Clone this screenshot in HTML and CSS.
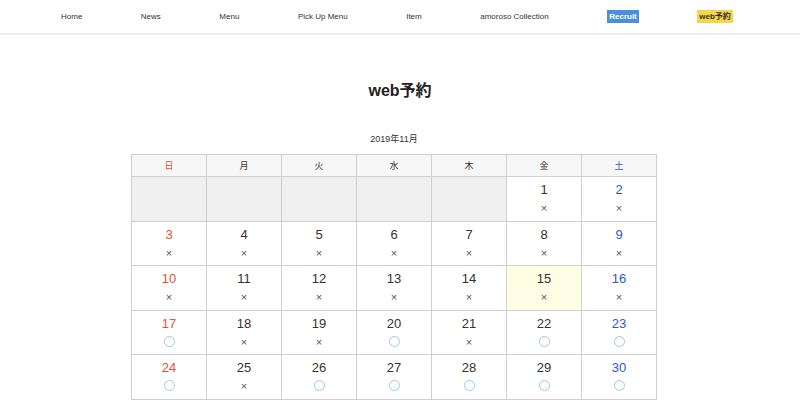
FILE: index.html
```html
<!DOCTYPE html>
<html lang="ja">
<head>
<meta charset="utf-8">
<link rel="stylesheet" href="styles.css">
</head>
<body>
<header class="nav">
  <a class="nav-item">Home</a>
  <a class="nav-item">News</a>
  <a class="nav-item">Menu</a>
  <a class="nav-item">Pick Up Menu</a>
  <a class="nav-item">Item</a>
  <a class="nav-item">amoroso Collection</a>
  <a class="nav-item badge badge-blue">Recruit</a>
  <a class="nav-item badge badge-yellow">web予約</a>
</header>
<main class="main">
  <h1 class="title">web予約</h1>
  <p class="month">2019年11月</p>
  <table class="cal">
    <thead>
      <tr><th class="sun">日</th><th>月</th><th>火</th><th>水</th><th>木</th><th>金</th><th class="sat">土</th></tr>
    </thead>
    <tbody>
      <tr>
        <td class="empty"></td><td class="empty"></td><td class="empty"></td><td class="empty"></td><td class="empty"></td>
        <td><span class="num">1</span><span class="x">×</span></td>
        <td><span class="num sat">2</span><span class="x">×</span></td>
      </tr>
      <tr>
        <td><span class="num sun">3</span><span class="x">×</span></td>
        <td><span class="num">4</span><span class="x">×</span></td>
        <td><span class="num">5</span><span class="x">×</span></td>
        <td><span class="num">6</span><span class="x">×</span></td>
        <td><span class="num">7</span><span class="x">×</span></td>
        <td><span class="num">8</span><span class="x">×</span></td>
        <td><span class="num sat">9</span><span class="x">×</span></td>
      </tr>
      <tr>
        <td><span class="num sun">10</span><span class="x">×</span></td>
        <td><span class="num">11</span><span class="x">×</span></td>
        <td><span class="num">12</span><span class="x">×</span></td>
        <td><span class="num">13</span><span class="x">×</span></td>
        <td><span class="num">14</span><span class="x">×</span></td>
        <td class="today"><span class="num">15</span><span class="x">×</span></td>
        <td><span class="num sat">16</span><span class="x">×</span></td>
      </tr>
      <tr>
        <td><span class="num sun">17</span><span class="o"></span></td>
        <td><span class="num">18</span><span class="x">×</span></td>
        <td><span class="num">19</span><span class="x">×</span></td>
        <td><span class="num">20</span><span class="o"></span></td>
        <td><span class="num">21</span><span class="x">×</span></td>
        <td><span class="num">22</span><span class="o"></span></td>
        <td><span class="num sat">23</span><span class="o"></span></td>
      </tr>
      <tr>
        <td><span class="num sun">24</span><span class="o"></span></td>
        <td><span class="num">25</span><span class="x">×</span></td>
        <td><span class="num">26</span><span class="o"></span></td>
        <td><span class="num">27</span><span class="o"></span></td>
        <td><span class="num">28</span><span class="o"></span></td>
        <td><span class="num">29</span><span class="o"></span></td>
        <td><span class="num sat">30</span><span class="o"></span></td>
      </tr>
    </tbody>
  </table>
</main>
</body>
</html>
```
FILE: styles.css
```css
html, body {
  margin: 0;
  padding: 0;
  background: #fff;
  font-family: "Liberation Sans", "Noto Sans CJK JP", sans-serif;
  color: #333;
}
.nav {
  display: flex;
  align-items: center;
  gap: 58.5px;
  height: 33px;
  padding-left: 61px;
  border-bottom: 2px solid #ececec;
  box-sizing: content-box;
}
.nav-item {
  font-size: 8px;
  color: #333;
  text-decoration: none;
  line-height: 13px;
}
.badge {
  font-weight: bold;
  padding: 0 2px;
  height: 13px;
}
.badge-blue {
  background: #4a8fdb;
  color: #fff;
}
.badge-yellow {
  background: #f5d54a;
  color: #333;
}
.main {
  padding-left: 131px;
  width: 526px;
}
.title {
  margin: 46px 0 0;
  font-size: 16px;
  line-height: 20px;
  font-weight: bold;
  text-align: center;
  color: #222;
  padding-left: 12px;
}
.month {
  margin: 32px 0 0;
  font-size: 9px;
  line-height: 12px;
  text-align: center;
  color: #333;
}
.cal {
  margin-top: 9px;
  width: 526px;
  border-collapse: collapse;
  table-layout: fixed;
}
.cal th, .cal td {
  border: 1px solid #cfcfcf;
  text-align: center;
  padding: 0;
}
.cal th {
  background: #f7f7f7;
  font-size: 9px;
  font-weight: normal;
  height: 21px;
  color: #333;
}
.cal th.sun { color: #e8513a; }
.cal th.sat { color: #2f56d6; }
.cal td {
  height: 43.6px;
  vertical-align: top;
}
.cal td.empty {
  background: #f0f0f0;
}
.cal td.today {
  background: #fffde3;
}
.num {
  display: block;
  font-size: 13px;
  line-height: 15px;
  margin-top: 5px;
  color: #333;
}
.x {
  display: block;
  font-size: 11px;
  line-height: 12px;
  margin-top: 5px;
  color: #555;
}
.o {
  display: block;
  width: 9px;
  height: 9px;
  border: 1px solid #9fc7e8;
  border-radius: 50%;
  margin: 5px auto 0;
}
.num.sun { color: #e8513a; }
.num.sat { color: #2f56d6; }
```
